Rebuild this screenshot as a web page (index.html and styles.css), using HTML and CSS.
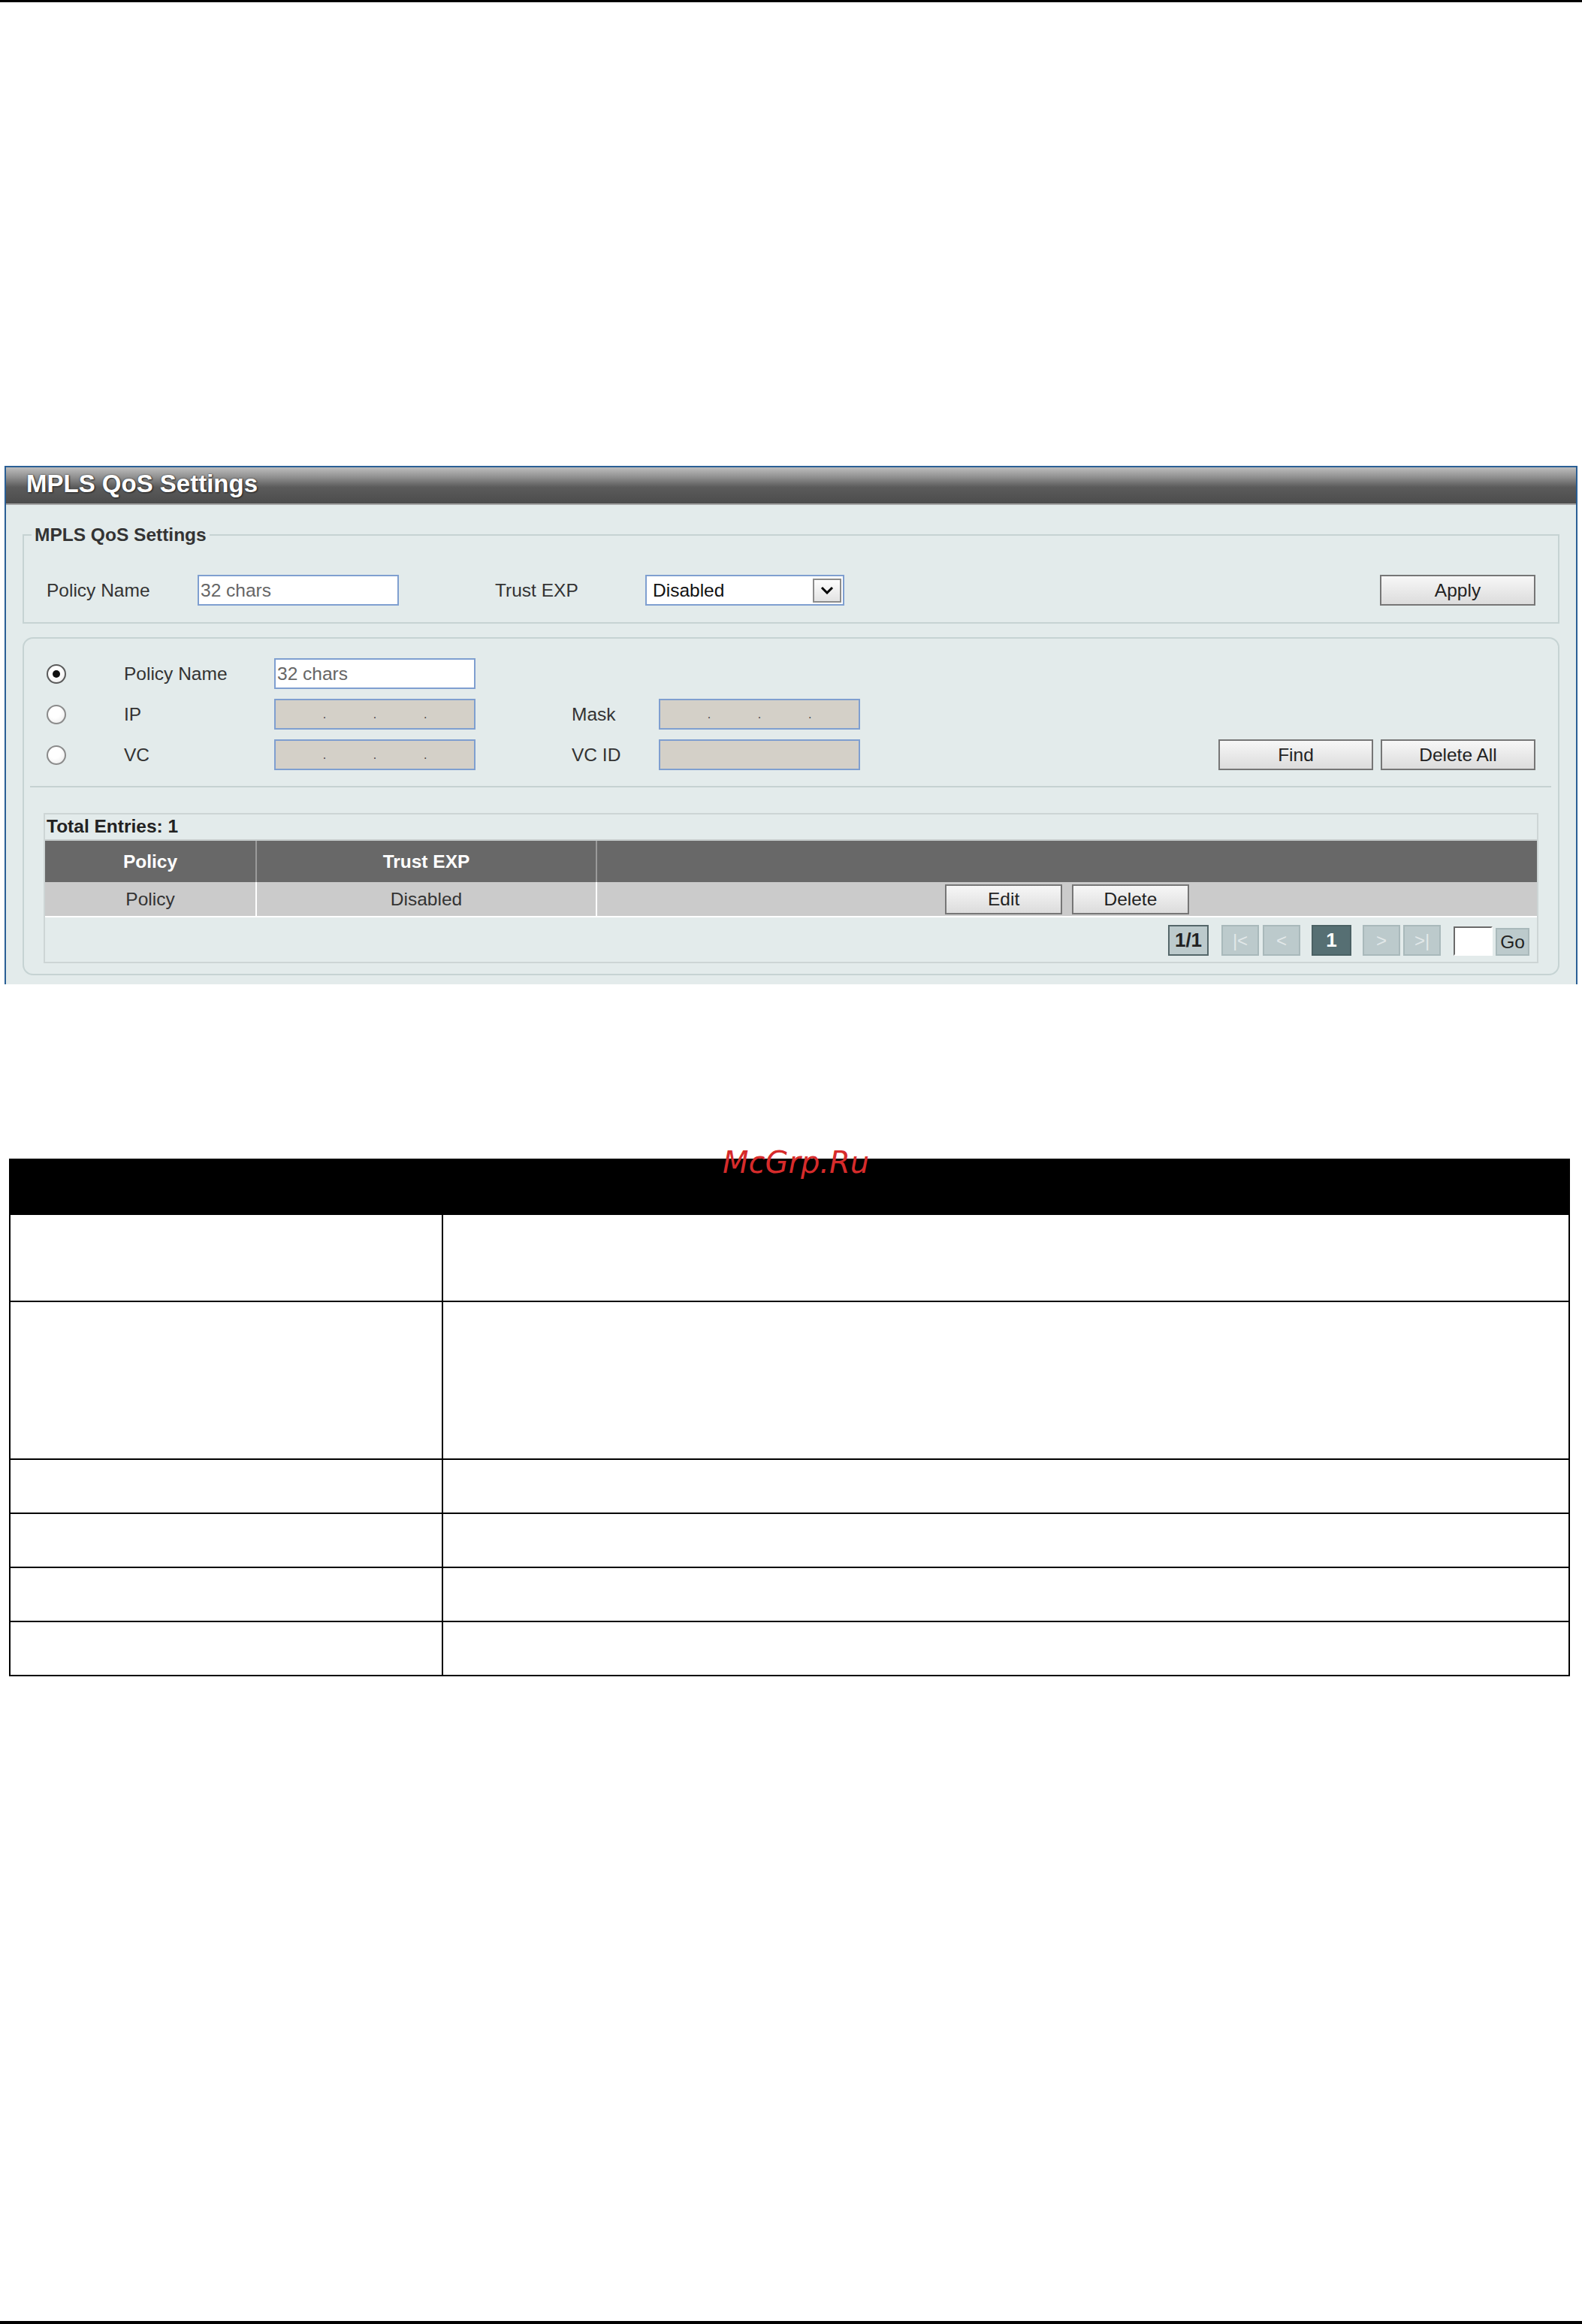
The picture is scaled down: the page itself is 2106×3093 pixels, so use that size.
FILE: index.html
```html
<!doctype html>
<html lang="en">
<head>
    <meta charset="UTF-8">
    <title>MPLS QoS Settings</title>
    <link rel="stylesheet" href="styles.css">
</head>
<body>

<div class="rule-top"></div>

<div class="panel">
    <div class="panel-title">MPLS QoS Settings</div>
    <div class="panel-body">

        <fieldset class="box box-set">
            <legend>MPLS QoS Settings</legend>
            <div class="set-row">
                <span class="lbl">Policy Name</span>
                <input class="txt" type="text" placeholder="32 chars">
                <span class="lbl lbl-trust">Trust EXP</span>
                <div class="select">
                    <span class="select-val">Disabled</span>
                    <span class="select-btn">
                        <svg width="18" height="11" viewBox="0 0 18 11"><polyline points="2,2 9,9 16,2" fill="none" stroke="#000" stroke-width="3"/></svg>
                    </span>
                </div>
                <span class="grow"></span>
                <button class="btn btn-wide">Apply</button>
            </div>
        </fieldset>

        <fieldset class="box box-find">
            <div class="find-row">
                <span class="radio checked"></span>
                <span class="lbl">Policy Name</span>
                <input class="txt" type="text" placeholder="32 chars">
            </div>
            <div class="find-row">
                <span class="radio"></span>
                <span class="lbl">IP</span>
                <div class="ipbox"><i></i><b>.</b><i></i><b>.</b><i></i><b>.</b><i></i></div>
                <span class="lbl lbl-2">Mask</span>
                <div class="ipbox"><i></i><b>.</b><i></i><b>.</b><i></i><b>.</b><i></i></div>
            </div>
            <div class="find-row">
                <span class="radio"></span>
                <span class="lbl">VC</span>
                <div class="ipbox"><i></i><b>.</b><i></i><b>.</b><i></i><b>.</b><i></i></div>
                <span class="lbl lbl-2">VC ID</span>
                <div class="ipbox"></div>
                <span class="grow"></span>
                <button class="btn btn-find">Find</button>
                <button class="btn btn-find">Delete All</button>
            </div>

            <div class="sep"></div>

            <div class="grid-wrap">
                <div class="total">Total Entries: 1</div>
                <table class="grid">
                    <tr>
                        <th class="c1">Policy</th>
                        <th class="c2">Trust EXP</th>
                        <th class="c3"></th>
                    </tr>
                    <tr>
                        <td class="c1">Policy</td>
                        <td class="c2">Disabled</td>
                        <td class="c3">
                            <button class="btn btn-row">Edit</button>
                            <button class="btn btn-row">Delete</button>
                        </td>
                    </tr>
                </table>
                <div class="pager">
                    <span class="pg pg-count">1/1</span>
                    <span class="pg pg-first">|&lt;</span>
                    <span class="pg pg-prev">&lt;</span>
                    <span class="pg pg-cur">1</span>
                    <span class="pg pg-next">&gt;</span>
                    <span class="pg pg-last">&gt;|</span>
                    <span class="pg-input"></span>
                    <span class="pg-go">Go</span>
                </div>
            </div>
        </fieldset>

    </div>
</div>

<table class="desc">
    <tr class="desc-head"><td class="d1"></td><td></td></tr>
    <tr class="h116"><td class="d1"></td><td></td></tr>
    <tr class="h210"><td class="d1"></td><td></td></tr>
    <tr class="h72"><td class="d1"></td><td></td></tr>
    <tr class="h72"><td class="d1"></td><td></td></tr>
    <tr class="h72"><td class="d1"></td><td></td></tr>
    <tr class="h72"><td class="d1"></td><td></td></tr>
</table>

<div class="mark">McGrp.Ru</div>

<div class="rule-bottom"></div>

</body>
</html>
```

FILE: styles.css
```css
* {
    margin: 0;
    padding: 0;
    box-sizing: border-box;
}
html, body {
    height: 100%;
}
body {
    position: relative;
    display: flex;
    flex-direction: column;
    min-height: 100vh;
    background: #fff;
    font-family: "Liberation Sans", Arial, sans-serif;
    font-size: 24.5px;
    color: #333;
}
.rule-top {
    height: 3px;
    background: #000;
}
.rule-bottom {
    height: 4px;
    margin-top: auto;
    background: #000;
}

/* panel */
.panel {
    margin: 617px 0 0 6px;
    width: 2094px;
    border: 2px solid #2a5f95;
    border-bottom: 0;
    background: #e3ebeb;
}
.panel-title {
    height: 50px;
    padding: 3px 0 0 27px;
    border-bottom: 2px solid #a3a3a3;
    background: linear-gradient(#bdbdbd 0%, #8e8e8e 28%, #5b5b5b 55%, #4c4c4c 100%);
    color: #fff;
    font-size: 33px;
    font-weight: bold;
    line-height: 38px;
    text-shadow: 1px 1px 2px #222, 0 0 2px #333;
}
.panel-body {
    padding: 0 22px 12px 22px;
}

/* fieldsets */
.box {
    border: 2px solid #c6d3d3;
    padding: 0 30px;
}
.box-set {
    margin-top: 26px;
    padding-bottom: 22px;
}
.box legend {
    margin-left: -20px;
    padding: 0 4px;
    line-height: 28px;
    font-weight: bold;
    color: #333;
}
.box-find {
    margin-top: 18px;
    padding-top: 26px;
    padding-bottom: 14px;
    border-radius: 14px;
}
.set-row {
    display: flex;
    align-items: center;
    margin-top: 39px;
}
.find-row {
    display: flex;
    align-items: center;
    height: 41px;
    margin-bottom: 13px;
}
.find-row:nth-child(3) {
    margin-bottom: 0;
}
.grow {
    flex: 1;
}
.lbl {
    width: 200px;
    flex-shrink: 0;
    color: #333;
}
.set-row .lbl {
    width: 201px;
}
.set-row .lbl-trust {
    width: 200px;
    margin-left: 128px;
}
.find-row .lbl-2 {
    width: 116px;
    margin-left: 128px;
}

/* inputs */
.txt {
    width: 268px;
    height: 41px;
    padding: 0 2px;
    border: 2px solid #7f9fd0;
    background: #fff;
    font-family: inherit;
    font-size: 24.5px;
    color: #555;
    outline: none;
}
.txt::placeholder {
    color: #666;
}
.ipbox {
    display: flex;
    align-items: center;
    width: 268px;
    height: 41px;
    border: 2px solid #7f9fd0;
    background: #d4d0c8;
}
.ipbox i {
    flex: 1;
}
.ipbox b {
    font-weight: normal;
    font-size: 16px;
    line-height: 16px;
    color: #444;
}
.select {
    display: flex;
    align-items: center;
    width: 265px;
    height: 41px;
    padding: 0 2px 0 8px;
    border: 2px solid #7f9fd0;
    background: #fff;
    color: #111;
}
.select-val {
    flex: 1;
}
.select-btn {
    display: flex;
    align-items: center;
    justify-content: center;
    width: 38px;
    height: 32px;
    border: 2px solid #8c8c8c;
    background: linear-gradient(#fdfdfd, #e3e3e3);
}

/* radios */
.radio {
    position: relative;
    width: 26px;
    height: 26px;
    margin-right: 77px;
    flex-shrink: 0;
    border: 2px solid #8a8a8a;
    border-radius: 50%;
    background: radial-gradient(circle at 40% 35%, #fff 40%, #e6e6e6 100%);
}
.radio.checked {
    border-color: #5a5a5a;
}
.radio.checked:after {
    content: '';
    position: absolute;
    left: 6px;
    top: 6px;
    width: 10px;
    height: 10px;
    border-radius: 50%;
    background: #111;
}

/* buttons */
.btn {
    height: 41px;
    border: 2px solid #767676;
    background: linear-gradient(#f7f7f7, #dcdcdc);
    font-family: inherit;
    font-size: 24.5px;
    color: #222;
}
.btn-wide {
    width: 207px;
}
.btn-find {
    width: 206px;
    margin-left: 10px;
}
.btn-row {
    width: 156px;
    height: 40px;
    margin: 0 3px;
}

/* entries table */
.sep {
    height: 2px;
    margin: 21px -21px 0 -22px;
    background: #c6d1d1;
}
.grid-wrap {
    margin: 34px -4px 0 -4px;
    border: 2px solid #cdd5d5;
}
.total {
    height: 35px;
    padding-left: 2px;
    border-bottom: 2px solid #c6cccc;
    font-weight: bold;
    line-height: 31px;
    color: #222;
}
.grid {
    width: 100%;
    border-collapse: separate;
    border-spacing: 0;
}
.grid th, .grid td {
    box-sizing: border-box;
    padding: 0;
    text-align: center;
    font-size: 24.5px;
}
.grid th {
    height: 55px;
    background: #686868;
    color: #fff;
    font-weight: bold;
    border-right: 2px solid #9a9a9a;
}
.grid td {
    height: 47px;
    background: #cbcbcb;
    color: #333;
    border-right: 2px solid #fff;
    border-bottom: 2px solid #fff;
}
.grid .c1 {
    width: 282px;
}
.grid .c2 {
    width: 453px;
}
.grid .c3 {
    border-right: 0;
}
.pager {
    display: flex;
    justify-content: flex-end;
    align-items: flex-end;
    height: 59px;
    padding: 0 10px 8px 0;
}
.pg {
    display: flex;
    align-items: center;
    justify-content: center;
    width: 50px;
    height: 41px;
    border: 2px solid #a9b9bb;
    background: #bccacc;
    color: #e2e8e9;
    font-size: 24px;
}
.pg-count {
    width: 54px;
    border-color: #55676a;
    color: #222;
    font-weight: bold;
    font-size: 26px;
}
.pg-first {
    margin-left: 17px;
}
.pg-prev {
    margin-left: 5px;
}
.pg-cur {
    width: 53px;
    margin-left: 15px;
    border-color: #4b6164;
    background: #566f73;
    color: #fff;
    font-weight: bold;
    font-size: 26px;
}
.pg-next {
    margin-left: 15px;
}
.pg-last {
    margin-left: 4px;
}
.pg-input {
    width: 52px;
    height: 39px;
    margin-left: 17px;
    border: 2px solid;
    border-color: #6a6a6a #fff #fff #6a6a6a;
    background: #fff;
}
.pg-go {
    display: flex;
    align-items: center;
    justify-content: center;
    width: 45px;
    height: 37px;
    margin-left: 4px;
    border: 2px solid #a9b9bb;
    background: #bccacc;
    color: #222;
}

/* description table */
.desc {
    margin: 232px 0 0 12px;
    width: 2078px;
    border-collapse: collapse;
}
.desc td {
    padding: 0;
    border: 2px solid #000;
}
.desc .d1 {
    width: 576px;
}
.desc-head td {
    height: 73px;
    background: #000;
}
.h116 td {
    height: 116px;
}
.h210 td {
    height: 210px;
}
.h72 td {
    height: 72px;
}

/* watermark */
.mark {
    position: absolute;
    left: 962px;
    top: 1527px;
    font-family: "DejaVu Sans", sans-serif;
    font-style: italic;
    font-size: 40px;
    line-height: 40px;
    color: #d62b2b;
}
```
